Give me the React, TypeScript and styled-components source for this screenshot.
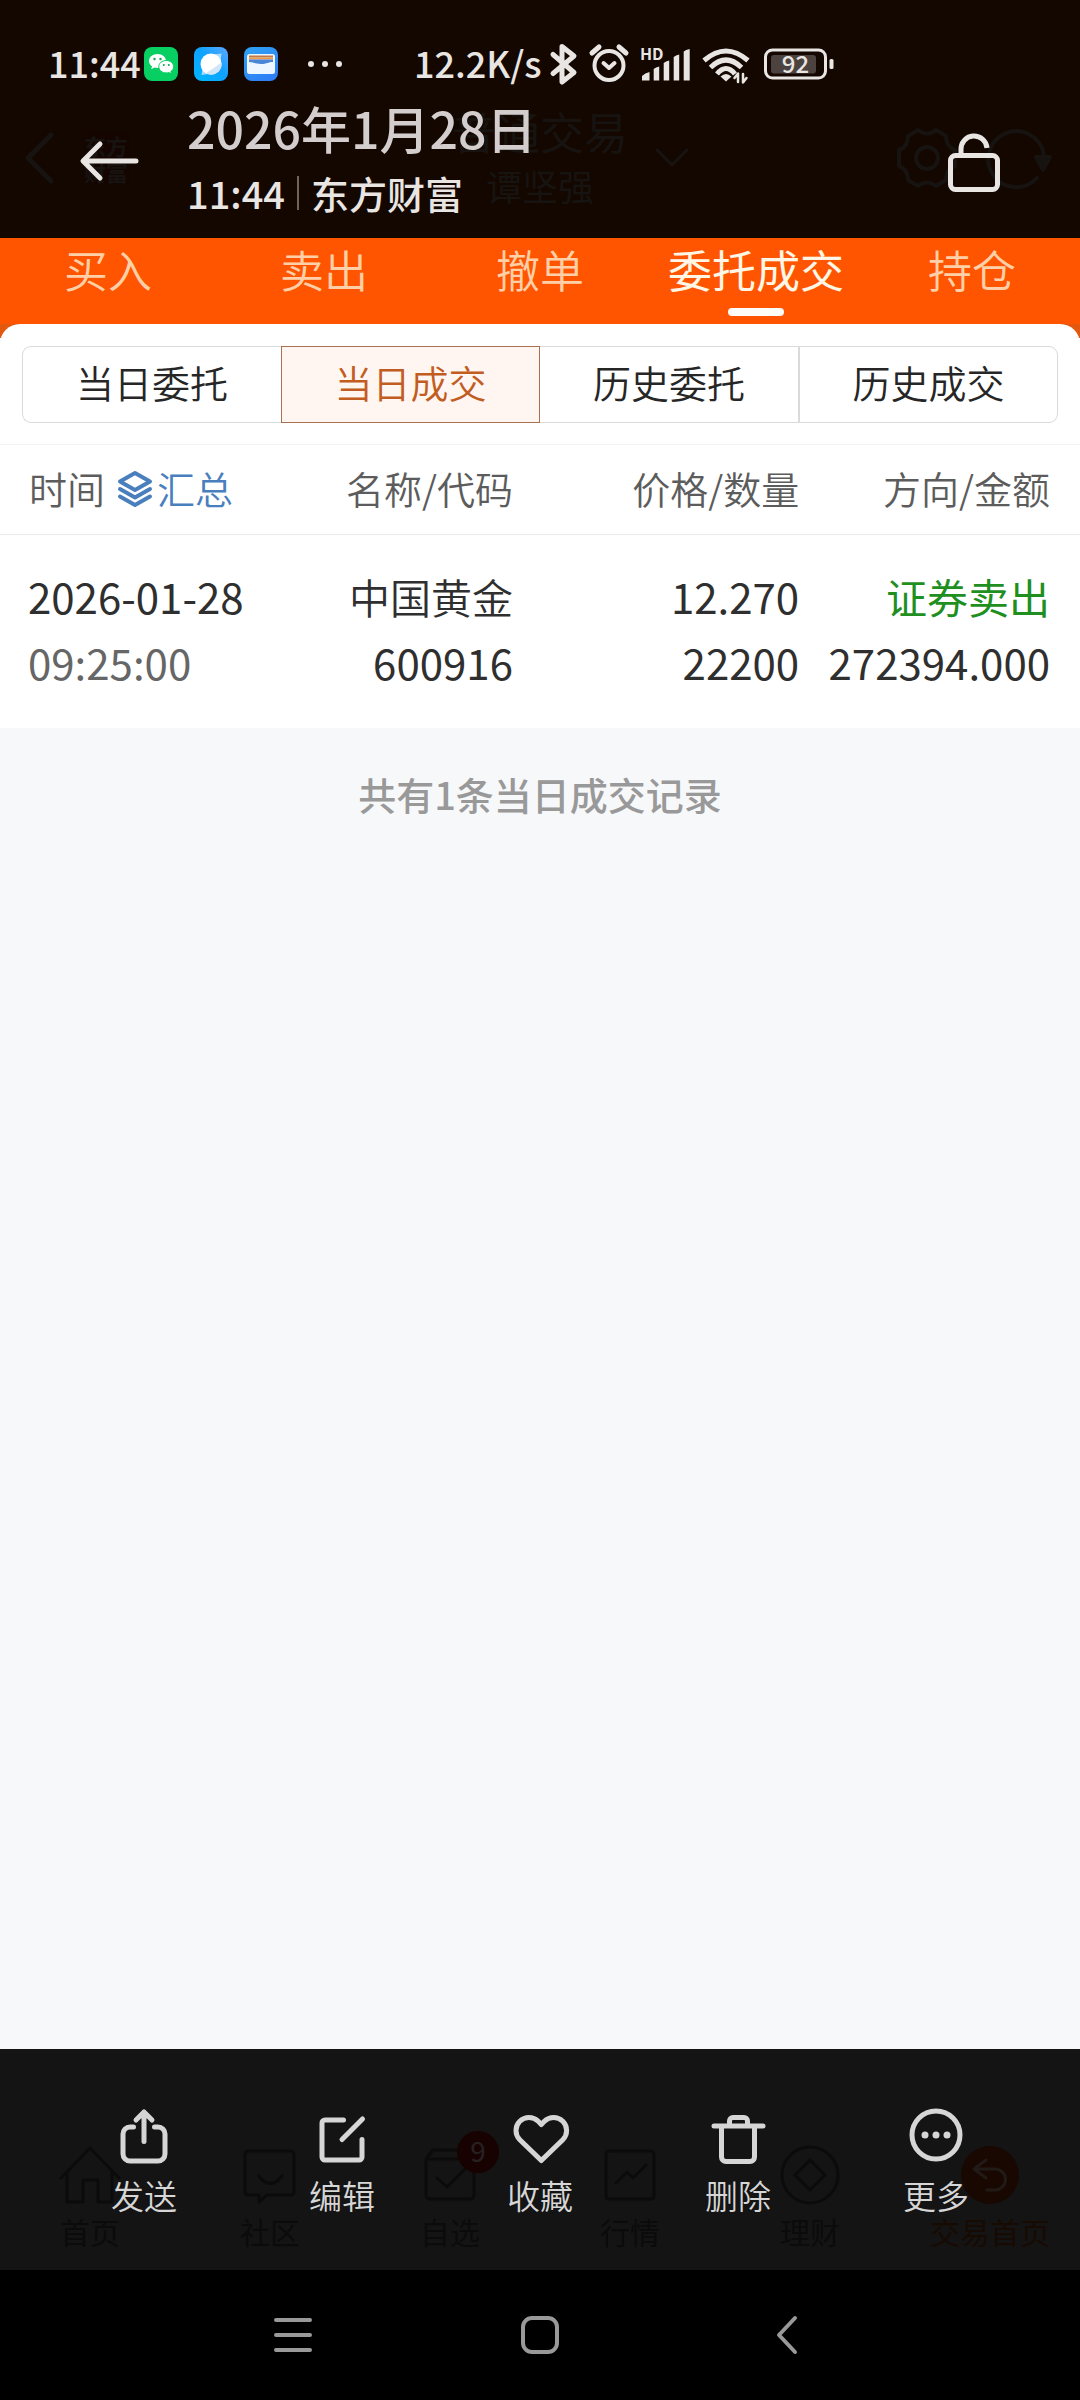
import React from 'react';
import styled, { createGlobalStyle } from 'styled-components';

const GlobalStyle = createGlobalStyle`
  *, *::before, *::after { box-sizing: border-box; }
  body { margin: 0; background: #f7f8fa; }
  body, button {
    font-family: "Noto Sans CJK SC", "Noto Sans", sans-serif;
  }
  button { border: 0; padding: 0; background: none; color: inherit; font-size: inherit; cursor: pointer; }
  svg { display: block; flex: none; overflow: visible; }
`;

const Page = styled.div`
  min-height: 100vh;
  display: flex;
  flex-direction: column;
`;

/* ---------- viewer header ---------- */

const Header = styled.header`
  background: #130700;
  color: #e8e5e3;
  padding-top: 38px;
`;

const StatusBar = styled.div`
  display: flex;
  align-items: center;
  height: 52px;
  padding-left: 48px;
  font-size: 36px;
  line-height: 48px;
  font-weight: 500;
`;

const StatusLeft = styled.div`
  display: flex;
  align-items: center;
  flex: 0 0 366px;
`;

const Clock = styled.span`
  flex: 0 0 96px;
  padding-bottom: 4px;
`;

const AppIcons = styled.div`
  display: flex;
  gap: 16px;
  margin-right: 29px;
`;

const StatusRight = styled.div`
  display: flex;
  align-items: center;
  gap: 8px;
`;

const Speed = styled.span`
  padding-bottom: 4px;
`;

const Stack = styled.div`
  display: grid;
  grid-template-columns: minmax(0, 1fr);

  > * { grid-area: 1 / 1; }
`;

const Ghost = styled.div`
  display: grid;
  grid-template-columns: 1fr 180px 1fr;
  align-items: center;
  padding-bottom: 13px;
  color: #171311;
`;

const GhostSide = styled.div`
  display: flex;
  align-items: center;
  gap: 30px;
  padding: 0 30px 0 24px;
`;

const GhostLogo = styled.span`
  width: 46px;
  font-size: 22px;
  line-height: 26px;
  font-weight: 700;
  background: #150500;
`;

const GhostAccount = styled.div`
  text-align: center;
  font-size: 44px;
  line-height: 54px;
`;

const GhostName = styled.div`
  font-size: 36px;
`;

const Spacer = styled.span`
  flex: 1;
`;

const ViewerBar = styled.div`
  display: flex;
  align-items: center;
  padding: 4px 76px 12px 78px;
  z-index: 1;
`;

const IconButton = styled.button`
  display: block;
`;

const Heading = styled.div`
  flex: 1;
  padding-left: 43px;
`;

const Title = styled.h1`
  margin: 0;
  font-size: 50px;
  line-height: 66px;
  font-weight: 500;
  color: #d3cecd;
`;

const Subtitle = styled.div`
  display: flex;
  align-items: center;
  gap: 12px;
  font-size: 38px;
  line-height: 66px;
  font-weight: 500;
`;

const Divider = styled.span`
  width: 2px;
  height: 34px;
  background: #6b6462;
`;

/* ---------- trading page ---------- */

const TabBar = styled.nav`
  display: grid;
  grid-template-columns: repeat(5, 1fr);
  background: #ff5500;
`;

const Tab = styled.button<{ $active?: boolean }>`
  height: 86px;
  padding-bottom: 8px;
  display: flex;
  flex-direction: column;
  align-items: center;
  justify-content: space-between;
  font-size: 44px;
  line-height: 62px;
  font-weight: ${p => (p.$active ? 400 : 350)};
  color: ${p => (p.$active ? '#fff6e6' : '#ffd0a8')};

  &::after {
    content: "";
    width: 56px;
    height: 8px;
    border-radius: 4px;
    background: ${p => (p.$active ? '#fffdf8' : 'transparent')};
  }
`;

const SheetBack = styled.div`
  background: linear-gradient(#e2580f 0 14px, #fff 14px);
`;

const Sheet = styled.div`
  padding: 22px 22px 21px;
  background: #fff;
  border-radius: 20px 20px 0 0;
`;

const Segments = styled.div`
  display: grid;
  grid-template-columns: repeat(4, 1fr);
`;

const Segment = styled.button<{ $active?: boolean }>`
  height: 77px;
  padding-bottom: 5px;
  font-size: 38px;
  line-height: 60px;
  font-weight: 350;
  color: ${p => (p.$active ? '#c25d22' : '#262626')};
  background: ${p => (p.$active ? '#fff6f2' : '#fff')};
  border: 1px solid ${p => (p.$active ? '#a9714f' : '#d9dadc')};

  &:first-child { border-radius: 9px 0 0 9px; border-right: 0; }
  &:last-child { border-radius: 0 9px 9px 0; }
  &:nth-child(3) { border-left: 0; }
`;

const Records = styled.table`
  width: 100%;
  table-layout: fixed;
  border-collapse: collapse;
  background: #fff;
  color: #2f2f2f;
`;

const HeadCell = styled.th<{ $width?: string }>`
  width: ${p => p.$width ?? 'auto'};
  height: 90px;
  padding: 0 0 4px;
  border-top: 1px solid #f4f4f4;
  border-bottom: 1px solid #ececec;
  font-size: 38px;
  line-height: 60px;
  font-weight: 350;
  text-align: right;
  white-space: nowrap;
  color: #5c5c5c;

  &:first-child { padding-left: 29px; text-align: left; }
  &:last-child { padding-right: 30px; }
`;

const HeadGroup = styled.div`
  display: flex;
  align-items: center;
  gap: 12px;
`;

const SummaryButton = styled.button`
  display: flex;
  align-items: center;
  gap: 4px;
  font-weight: 350;
  color: #4a7fbe;
`;

const Cell = styled.td`
  padding: 28px 0 33px;
  text-align: right;
  white-space: nowrap;

  &:first-child { padding-left: 28px; text-align: left; }
  &:last-child { padding-right: 30px; }
`;

const Line = styled.div<{ $tone?: 'muted' | 'sell'; $cjk?: boolean }>`
  height: 66px;
  line-height: 66px;
  font-size: ${p => (p.$cjk ? 41 : 42)}px;
  font-weight: ${p => (p.$cjk && p.$tone !== 'sell' ? 350 : 400)};
  color: ${p => (p.$tone === 'muted' ? '#666' : p.$tone === 'sell' ? '#1f8f1f' : 'inherit')};
`;

const Content = styled.main`
  flex: 1;
  display: flex;
  flex-direction: column;
  background: #f7f8fa;
`;

const Note = styled.p`
  margin: 0;
  padding-top: 36px;
  text-align: center;
  font-size: 38px;
  line-height: 60px;
  font-weight: 500;
  color: #999;
`;

/* ---------- bottom ---------- */

const BottomPanel = styled(Stack)`
  height: 221px;
  background: #141414;
`;

const GhostNav = styled.div`
  display: grid;
  grid-template-columns: repeat(6, 1fr);
  padding-top: 92px;
  color: #0b0b0b;
`;

const GhostItem = styled.div<{ $accent?: boolean }>`
  display: flex;
  flex-direction: column;
  align-items: center;
  font-size: 30px;
  line-height: 44px;
  color: ${p => (p.$accent ? '#170a03' : 'inherit')};
`;

const GhostIcon = styled.div`
  position: relative;
`;

const GhostBadge = styled.span`
  position: absolute;
  top: -10px;
  right: -18px;
  width: 42px;
  height: 42px;
  border-radius: 50%;
  background: #180101;
  color: #272222;
  font-size: 28px;
  line-height: 38px;
  text-align: center;
`;

const Actions = styled.div`
  display: grid;
  grid-template-columns: repeat(5, 1fr);
  padding: 54px 45px 0;
  z-index: 1;
`;

const Action = styled.button`
  display: flex;
  flex-direction: column;
  align-items: center;
  align-self: start;
  gap: 2px;
  font-size: 33px;
  line-height: 44px;
  font-weight: 350;
  color: #d6d6d6;
`;

const SystemNav = styled.nav`
  display: grid;
  grid-template-columns: repeat(3, 1fr);
  justify-items: center;
  align-items: center;
  height: 130px;
  padding: 0 169px;
  background: #000;
  color: #999;
`;

/* ---------- icons ---------- */

type StrokeProps = { w: number; h: number; sw: number; children: React.ReactNode };
const Stroke = ({ w, h, sw, children }: StrokeProps) => (
  <svg width={w} height={h} viewBox={`0 0 ${w} ${h}`} fill="none" stroke="currentColor"
    strokeWidth={sw} strokeLinecap="round" strokeLinejoin="round" aria-hidden="true">
    {children}
  </svg>
);

const WeChatIcon = () => (
  <svg width="34" height="34" viewBox="0 0 34 34" aria-hidden="true">
    <rect width="34" height="34" rx="8" fill="#07cf62" />
    <path d="M13.500 7c-4.800 0-8.500 3.100-8.500 7 0 2.200 1.200 4.100 3 5.400l-.8 2.900 3.200-1.700c1 .3 2 .4 3.100.4 4.800 0 8.500-3.100 8.500-7s-3.700-7-8.500-7z" fill="#fff" />
    <path d="M22.200 13.500c-4.200 0-7.400 2.700-7.400 6.200s3.200 6.200 7.400 6.200c.9 0 1.800-.1 2.600-.4l2.700 1.500-.7-2.500c1.700-1.100 2.800-2.800 2.800-4.800 0-3.500-3.200-6.200-7.400-6.200z" fill="#fff" stroke="#07cf62" strokeWidth="1" />
    <g fill="#07a850">
      <circle cx="10.500" cy="12" r="1.200" /><circle cx="16.500" cy="12" r="1.200" />
      <circle cx="19.800" cy="18" r="1" /><circle cx="24.800" cy="18" r="1" />
    </g>
  </svg>
);

const BrowserIcon = () => (
  <svg width="34" height="34" viewBox="0 0 34 34" aria-hidden="true">
    <linearGradient id="browserBg" x1="0" y1="1" x2="1" y2="0">
      <stop offset="0" stopColor="#00b7ff" /><stop offset="0.550" stopColor="#0fa2ff" /><stop offset="1" stopColor="#5fa8ff" />
    </linearGradient>
    <rect width="34" height="34" rx="8" fill="url(#browserBg)" />
    <path d="M19 7.500l8.500-1-1 8.500zM14 27l-6.500 1 1-7z" fill="#a9dcff" />
    <circle cx="17" cy="17" r="10.500" fill="#fff" />
    <path d="M27.500 15.500A10.500 10.500 0 0 1 12 26.300z" fill="#d3e6f8" />
  </svg>
);

const WalletIcon = () => (
  <svg width="34" height="34" viewBox="0 0 34 34" aria-hidden="true">
    <linearGradient id="walletBg" x1="0" y1="0" x2="0.600" y2="1">
      <stop offset="0" stopColor="#2fa3f2" /><stop offset="1" stopColor="#2f80f5" />
    </linearGradient>
    <rect width="34" height="34" rx="8" fill="url(#walletBg)" />
    <rect x="3" y="7" width="28" height="20" rx="2.500" fill="#eef6ff" />
    <rect x="5" y="8.500" width="24" height="2" fill="#c07a4a" />
    <rect x="5" y="10.500" width="24" height="2" fill="#f09a48" />
    <path d="M5 12.500h24v2.500c-5 0-6 2-12 2s-7-2-12-2z" fill="#4a86d8" />
  </svg>
);

const MoreDots = () => (
  <svg width="36" height="8" viewBox="0 0 36 8" fill="currentColor" aria-hidden="true">
    <circle cx="4" cy="4" r="3" /><circle cx="18" cy="4" r="3" /><circle cx="32" cy="4" r="3" />
  </svg>
);

const SignalIcon = () => (
  <svg width="54" height="44" viewBox="0 0 54 44" fill="currentColor" aria-label="HD">
    <text x="0" y="18" fontSize="16" fontWeight="700">HD</text>
    <path d="M2 38.500V34q3-3 7.500-4v8.500zM13.700 38.500V27q2-2 5.500-2.500v14zM23.700 38.500V21q2-2 5.500-2.500v20zM33.700 38.500V15q2-2 5.500-2.500v26zM43.700 38.500V9.500q2-2 6-2.500v31.500z" />
  </svg>
);

const WifiIcon = () => (
  <Stroke w={54} h={44} sw={5}>
    <g strokeLinecap="butt">
      <path d="M2 18.500Q24-.5 46 18.500M8.500 25.500Q24 10.500 39.500 25.500M15 32Q24 21 33 32" />
    </g>
    <path d="M24 39.500l-5.500-5q5.500-5 11 0z" fill="currentColor" stroke="none" />
    <path d="M36 40V31.500L32.500 36M41 32v8.500L44.500 36" strokeWidth="2.500" />
  </Stroke>
);

const BatteryIcon = () => (
  <svg width="70" height="44" viewBox="0 0 70 44" aria-hidden="true">
    <rect x="1.500" y="8" width="60" height="28" rx="7" fill="none" stroke="currentColor" strokeWidth="3" />
    <rect x="7" y="13" width="45" height="18.500" rx="3" fill="#4c4340" />
    <rect x="65.500" y="17" width="4" height="10" rx="1.500" fill="currentColor" />
    <text x="31.500" y="31" fontSize="24" fontWeight="500" textAnchor="middle" fill="currentColor">92</text>
  </svg>
);

const LayersIcon = () => (
  <Stroke w={36} h={38} sw={4}>
    <path d="M18 4L33 12.500 18 21 3 12.500zM3 20l15 8.500L33 20M3 27.500L18 36l15-8.500" />
  </Stroke>
);

const tabs = ['买入', '卖出', '撤单', '委托成交', '持仓'];
const segments = ['当日委托', '当日成交', '历史委托', '历史成交'];

const actions = [
  { label: '发送', icon: <path d="M23.500 24H20a7 7 0 0 0-7 7V51a7 7 0 0 0 7 7h28a7 7 0 0 0 7-7V31a7 7 0 0 0-7-7h-3.500M34 38.500V9M26 17l8-8 8 8" /> },
  { label: '编辑', icon: <path d="M35.500 17H17a3 3 0 0 0-3 3V54a3 3 0 0 0 3 3h34a3 3 0 0 0 3-3V36.500M54.500 16L34 36.500" /> },
  { label: '收藏', icon: <path d="M35.300 57.500L13.800 36.700A13 13 0 0 1 32.200 18.300L35.300 21.500L38.400 18.300A13 13 0 0 1 56.800 36.700z" /> },
  { label: '删除', icon: <path d="M10 23h49M17.500 23V54a4.500 4.500 0 0 0 4.500 4.500h24a4.500 4.500 0 0 0 4.500-4.500V23M25.500 22v-4a3.500 3.500 0 0 1 3.500-3.500h11a3.500 3.500 0 0 1 3.500 3.500v4" /> },
  {
    label: '更多',
    icon: (
      <>
        <circle cx="34" cy="32" r="24" />
        <g fill="currentColor" stroke="none">
          <circle cx="23" cy="32" r="3.500" /><circle cx="34" cy="32" r="3.500" /><circle cx="45" cy="32" r="3.500" />
        </g>
      </>
    ),
  },
];

const ghostNav = [
  { label: '首页', icon: <path d="M2 37L31 7l29 30M8 32v29h16V39h15v22h14V32" /> },
  { label: '社区', icon: <path d="M9 10h43a3 3 0 0 1 3 3v38a3 3 0 0 1-3 3H28l-8 7v-7H9a3 3 0 0 1-3-3V13a3 3 0 0 1 3-3zM20 35q11 15 23 0" /> },
  { label: '自选', badge: '9', icon: <path d="M7 18l7-9h34l7 9v36a4 4 0 0 1-4 4H11a4 4 0 0 1-4-4zh48M18 37l10 9 18-18" /> },
  { label: '行情', icon: <path d="M10 10h42a3 3 0 0 1 3 3v42a3 3 0 0 1-3 3H10a3 3 0 0 1-3-3V13a3 3 0 0 1 3-3zM17 42l11-11 6 6 13-13" /> },
  { label: '理财', icon: <><circle cx="31" cy="34" r="28" /><path d="M31 19l15 15-15 15-15-15z" /></> },
  { label: '交易首页', accent: true, icon: <><circle cx="31" cy="34" r="29" fill="#180801" stroke="none" /><path d="M27 19L15 28l12 9M15 28h21a10 10 0 0 1 0 21h-8" stroke="#211a17" /></> },
];

export default function App() {
  return (
    <Page>
      <GlobalStyle />
      <Header>
        <StatusBar>
          <StatusLeft>
            <Clock>11:44</Clock>
            <AppIcons>
              <WeChatIcon />
              <BrowserIcon />
              <WalletIcon />
            </AppIcons>
            <MoreDots />
          </StatusLeft>
          <StatusRight>
            <Speed>12.2K/s</Speed>
            <Stroke w={28} h={44} sw={5}><path d="M3 12.500L24 30.500 12 40V4.500L24 14 3 31.500" /></Stroke>
            <Stroke w={46} h={44} sw={4}>
              <circle cx="23" cy="23.500" r="14.500" />
              <path d="M6 11l7-6M33 5l7 6" strokeWidth="5" />
              <path d="M17.500 21l5.500 5 5.500-5" />
            </Stroke>
            <SignalIcon />
            <WifiIcon />
            <BatteryIcon />
          </StatusRight>
        </StatusBar>
        <Stack>
          <Ghost aria-hidden="true">
            <GhostSide>
              <Stroke w={30} h={52} sw={5}><path d="M27 3L4 26l23 23" /></Stroke>
              <GhostLogo>东方财富</GhostLogo>
            </GhostSide>
            <GhostAccount>
              普通交易
              <GhostName>谭坚强</GhostName>
            </GhostAccount>
            <GhostSide>
              <Stroke w={36} h={20} sw={3}><path d="M3 2l15 15L33 2" /></Stroke>
              <Spacer />
              <Stroke w={62} h={62} sw={4}>
                <path d="M22 3q9 7 18 0l10 6q0 11 9 14v16q-9 3-9 14l-10 6q-9-7-18 0l-10-6q0-11-9-14V23q9-3 9-14z" />
                <circle cx="31" cy="31" r="11" />
              </Stroke>
              <Stroke w={62} h={62} sw={4}>
                <path d="M49 51A28 28 0 1 1 56 28" />
                <path d="M48 30h14l-7 13z" fill="currentColor" />
              </Stroke>
            </GhostSide>
          </Ghost>
          <ViewerBar>
            <IconButton aria-label="返回">
              <Stroke w={66} h={60} sw={5}><path d="M58 31H6M22 14L5 31l17 17" /></Stroke>
            </IconButton>
            <Heading>
              <Title>2026年1月28日</Title>
              <Subtitle>
                <span>11:44</span>
                <Divider />
                <span>东方财富</span>
              </Subtitle>
            </Heading>
            <IconButton aria-label="解锁">
              <Stroke w={60} h={72} sw={5}>
                <rect x="6.500" y="31.500" width="47" height="34" rx="5" />
                <path d="M17 32v-6A13 13 0 0 1 43 24" strokeLinecap="butt" />
              </Stroke>
            </IconButton>
          </ViewerBar>
        </Stack>
      </Header>

      <TabBar>
        {tabs.map(t => <Tab key={t} $active={t === '委托成交'}>{t}</Tab>)}
      </TabBar>

      <Content>
        <SheetBack>
          <Sheet>
            <Segments>
              {segments.map(s => <Segment key={s} $active={s === '当日成交'}>{s}</Segment>)}
            </Segments>
          </Sheet>
        </SheetBack>
        <Records>
          <thead>
            <tr>
              <HeadCell $width="22%">
                <HeadGroup>
                  时间
                  <SummaryButton><LayersIcon />汇总</SummaryButton>
                </HeadGroup>
              </HeadCell>
              <HeadCell $width="25.5%">名称/代码</HeadCell>
              <HeadCell $width="26.5%">价格/数量</HeadCell>
              <HeadCell>方向/金额</HeadCell>
            </tr>
          </thead>
          <tbody>
            <tr>
              <Cell><Line>2026-01-28</Line><Line $tone="muted">09:25:00</Line></Cell>
              <Cell><Line $cjk>中国黄金</Line><Line>600916</Line></Cell>
              <Cell><Line>12.270</Line><Line>22200</Line></Cell>
              <Cell><Line $cjk $tone="sell">证券卖出</Line><Line>272394.000</Line></Cell>
            </tr>
          </tbody>
        </Records>
        <Note>共有1条当日成交记录</Note>
      </Content>

      <BottomPanel>
        <GhostNav aria-hidden="true">
          {ghostNav.map(g => (
            <GhostItem key={g.label} $accent={g.accent}>
              <GhostIcon>
                <Stroke w={62} h={68} sw={3}>{g.icon}</Stroke>
                {g.badge && <GhostBadge>{g.badge}</GhostBadge>}
              </GhostIcon>
              {g.label}
            </GhostItem>
          ))}
        </GhostNav>
        <Actions>
          {actions.map(a => (
            <Action key={a.label}>
              <Stroke w={68} h={68} sw={5}>{a.icon}</Stroke>
              {a.label}
            </Action>
          ))}
        </Actions>
      </BottomPanel>

      <SystemNav>
        <IconButton aria-label="最近任务">
          <Stroke w={40} h={40} sw={4}><path d="M3 5h34M3 20h34M3 35h34" /></Stroke>
        </IconButton>
        <IconButton aria-label="主屏幕">
          <Stroke w={40} h={40} sw={4}><rect x="3" y="3" width="34" height="34" rx="9" /></Stroke>
        </IconButton>
        <IconButton aria-label="后退">
          <Stroke w={24} h={40} sw={4}><path d="M20 3L4 20l16 17" /></Stroke>
        </IconButton>
      </SystemNav>
    </Page>
  );
}
